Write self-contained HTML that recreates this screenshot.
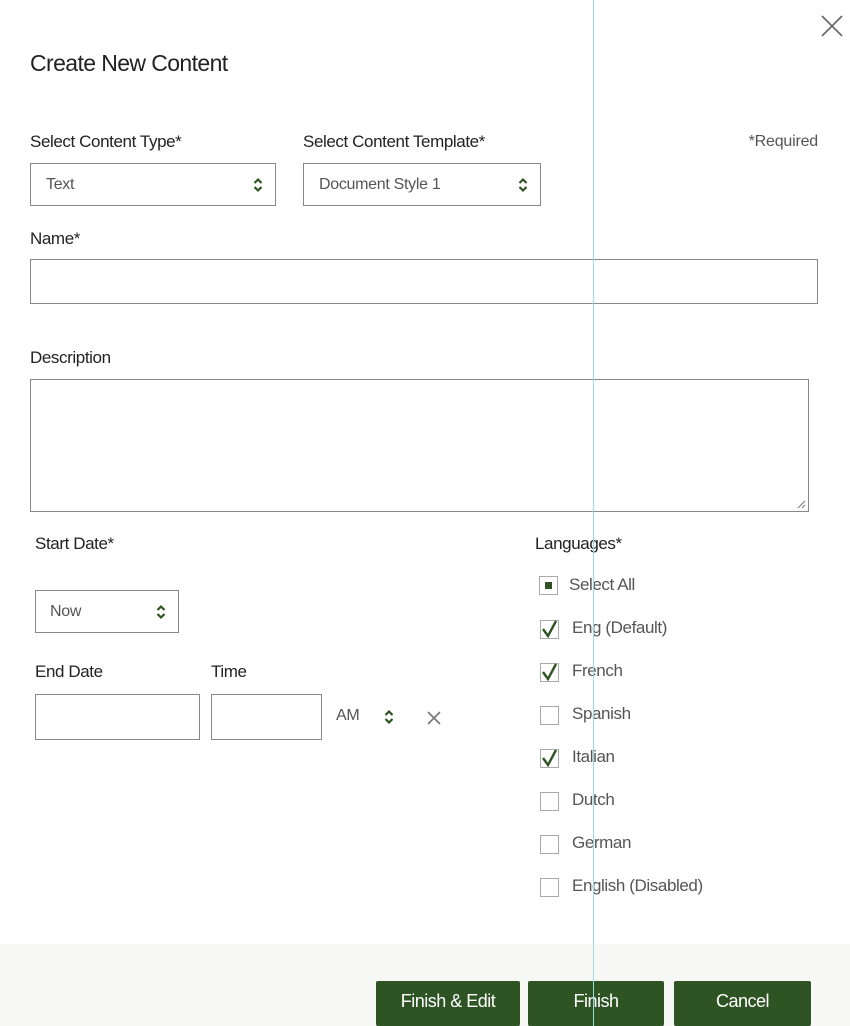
<!DOCTYPE html>
<html><head><style>
body{margin:0;width:850px;height:1026px;position:relative;background:#fff;font-family:"Liberation Sans",sans-serif;color:#222;overflow:hidden}
.a{position:absolute;white-space:nowrap}
.lbl{font-size:17px;letter-spacing:-0.4px}
.box{position:absolute;border:1.5px solid #888;box-sizing:border-box;background:#fff}
.sel{font-size:16px;color:#555;letter-spacing:-0.3px}
.arr{position:absolute;right:12px;top:50%;margin-top:-8px}
.cb{position:absolute;width:19px;height:19px;border:1px solid #aaa;box-sizing:border-box;background:#fff}
.lang{font-size:17px;color:#555;letter-spacing:-0.4px}
.btn{position:absolute;top:981px;height:45px;background:#2f5424;color:#fff;font-size:18px;letter-spacing:-0.5px;text-align:center;line-height:40px;border-radius:2px}
</style></head><body>
<svg class="a" style="left:820px;top:14px" width="24" height="24"><path d="M2 2L22 22M22 2L2 22" stroke="#666" stroke-width="1.6"/></svg>
<div class="a" style="left:30px;top:50px;font-size:23px;letter-spacing:-0.6px">Create New Content</div>
<div class="a lbl" style="left:30px;top:132px">Select Content Type*</div>
<div class="a lbl" style="left:303px;top:132px">Select Content Template*</div>
<div class="a" style="left:739px;top:133px;font-size:16px;color:#555;letter-spacing:-0.2px;width:79px;text-align:right">*Required</div>
<div class="box" style="left:30px;top:163px;width:246px;height:43px"><span class="a sel" style="left:15px;top:12px">Text</span><svg class="arr" width="10" height="16"><path d="M1.5 6L5 2.5L8.5 6M1.5 10L5 13.5L8.5 10" stroke="#2f5424" stroke-width="2.2" fill="none"/></svg></div>
<div class="box" style="left:303px;top:163px;width:238px;height:43px"><span class="a sel" style="left:15px;top:12px">Document Style 1</span><svg class="arr" width="10" height="16"><path d="M1.5 6L5 2.5L8.5 6M1.5 10L5 13.5L8.5 10" stroke="#2f5424" stroke-width="2.2" fill="none"/></svg></div>
<div class="a lbl" style="left:30px;top:229px">Name*</div>
<div class="box" style="left:30px;top:259px;width:788px;height:45px"></div>
<div class="a lbl" style="left:30px;top:348px">Description</div>
<div class="box" style="left:30px;top:379px;width:779px;height:133px"><svg class="a" style="right:2px;bottom:2px" width="10" height="10"><path d="M9 2L2 9M9 6L6 9" stroke="#777"/></svg></div>
<div class="a lbl" style="left:35px;top:534px">Start Date*</div>
<div class="box" style="left:35px;top:590px;width:144px;height:43px"><span class="a sel" style="left:14px;top:12px">Now</span><svg class="arr" width="10" height="16"><path d="M1.5 6L5 2.5L8.5 6M1.5 10L5 13.5L8.5 10" stroke="#2f5424" stroke-width="2.2" fill="none"/></svg></div>
<div class="a lbl" style="left:35px;top:662px">End Date</div>
<div class="a lbl" style="left:211px;top:662px">Time</div>
<div class="box" style="left:35px;top:694px;width:165px;height:46px"></div>
<div class="box" style="left:211px;top:694px;width:111px;height:46px"></div>
<div class="a sel" style="left:336px;top:707px">AM</div>
<svg class="a" style="left:384px;top:709px" width="10" height="16"><path d="M1.5 6L5 2.5L8.5 6M1.5 10L5 13.5L8.5 10" stroke="#2f5424" stroke-width="2.2" fill="none"/></svg>
<svg class="a" style="left:427px;top:711px" width="14" height="14"><path d="M1 1L13 13M13 1L1 13" stroke="#777" stroke-width="1.6"/></svg>
<div class="a lbl" style="left:535px;top:534px">Languages*</div>
<div class="cb" style="left:539px;top:576px"><div class="a" style="left:5px;top:5px;width:7px;height:7px;background:#2f5424"></div></div>
<div class="a lang" style="left:569px;top:575px">Select All</div>
<div class="cb" style="left:540px;top:620px"></div><svg class="a" style="left:541px;top:619px" width="18" height="20"><path d="M2 10L7 17L15 2" stroke="#2f5424" stroke-width="2.4" fill="none"/></svg>
<div class="a lang" style="left:572px;top:618px">Eng (Default)</div>
<div class="cb" style="left:540px;top:663px"></div><svg class="a" style="left:541px;top:662px" width="18" height="20"><path d="M2 10L7 17L15 2" stroke="#2f5424" stroke-width="2.4" fill="none"/></svg>
<div class="a lang" style="left:572px;top:661px">French</div>
<div class="cb" style="left:540px;top:706px"></div>
<div class="a lang" style="left:572px;top:704px">Spanish</div>
<div class="cb" style="left:540px;top:749px"></div><svg class="a" style="left:541px;top:748px" width="18" height="20"><path d="M2 10L7 17L15 2" stroke="#2f5424" stroke-width="2.4" fill="none"/></svg>
<div class="a lang" style="left:572px;top:747px">Italian</div>
<div class="cb" style="left:540px;top:792px"></div>
<div class="a lang" style="left:572px;top:790px">Dutch</div>
<div class="cb" style="left:540px;top:835px"></div>
<div class="a lang" style="left:572px;top:833px">German</div>
<div class="cb" style="left:540px;top:878px"></div>
<div class="a lang" style="left:572px;top:876px">English (Disabled)</div>
<div class="a" style="left:0;top:944px;width:850px;height:82px;background:#f7f7f5"></div>
<div class="btn" style="left:376px;width:144px">Finish &amp; Edit</div>
<div class="btn" style="left:528px;width:136px">Finish</div>
<div class="btn" style="left:674px;width:137px">Cancel</div>
<div class="a" style="left:593px;top:0;width:1px;height:1026px;background:#9dd"></div>
</body></html>
